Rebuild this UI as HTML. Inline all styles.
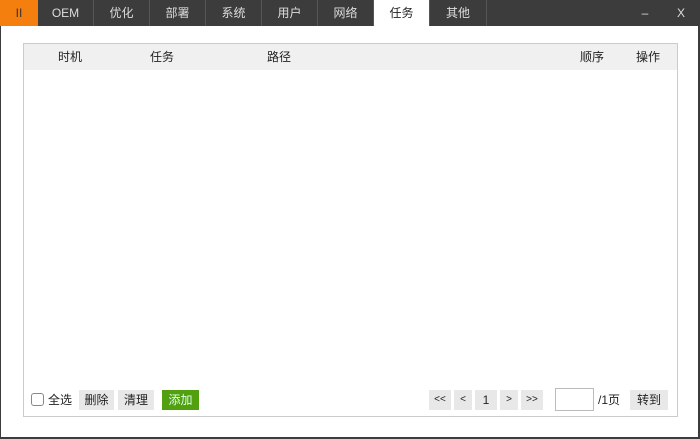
<!DOCTYPE html><html><head><meta charset="utf-8"><style>
*{margin:0;padding:0;box-sizing:border-box}
body{width:700px;height:439px;background:#3c3c3c;font-family:"Liberation Sans","Noto Sans CJK SC",sans-serif;font-size:12px;color:#222;position:relative;overflow:hidden}
.top{position:absolute;left:0;top:0;width:700px;height:26px;background:#3c3c3c}
.tab{position:absolute;top:0;height:26px;line-height:26px;text-align:center;color:#ddd;font-size:12px;border-right:1px solid #555}
.main{position:absolute;left:1px;top:26px;width:697px;height:411px;background:#fff}
.panel{position:absolute;left:23px;top:43px;width:655px;height:374px;border:1px solid #ccc;background:#fff}
.hdr{position:absolute;left:0;top:0;width:653px;height:26px;background:#f0f0f0;line-height:26px}
.hdr span{position:absolute;top:0}
.btn{position:absolute;top:346px;height:20px;line-height:20px;background:#e8e8e8;text-align:center;font-size:12px}
</style></head><body>
<div class="top">
<div class="tab" style="left:0;width:38px;background:#f57f0e;color:#333;border:none">II</div>
<div class="tab" style="left:38px;width:56px">OEM</div>
<div class="tab" style="left:94px;width:56px">优化</div>
<div class="tab" style="left:150px;width:56px">部署</div>
<div class="tab" style="left:206px;width:56px">系统</div>
<div class="tab" style="left:262px;width:56px">用户</div>
<div class="tab" style="left:318px;width:56px">网络</div>
<div class="tab" style="left:374px;width:56px;background:#fff;color:#222">任务</div>
<div class="tab" style="left:430px;width:57px">其他</div>
<div class="tab" style="left:630px;width:30px;border:none">–</div>
<div class="tab" style="left:666px;width:30px;border:none">X</div>
</div>
<div class="main"></div>
<div class="panel">
<div class="hdr"><span style="left:34px">时机</span><span style="left:126px">任务</span><span style="left:243px">路径</span><span style="left:556px">顺序</span><span style="left:612px">操作</span></div>
<div style="position:absolute;left:7px;top:349px;width:13px;height:13px;border:1px solid #888;border-radius:3px"></div>
<div style="position:absolute;left:24px;top:346px;line-height:20px">全选</div>
<div class="btn" style="left:55px;width:35px">删除</div>
<div class="btn" style="left:94px;width:36px">清理</div>
<div class="btn" style="left:138px;width:37px;background:#52a00f;color:#dfe">添加</div>
<div class="btn" style="left:405px;width:22px;font-size:10px">&lt;&lt;</div>
<div class="btn" style="left:430px;width:18px;font-size:10px">&lt;</div>
<div class="btn" style="left:451px;width:22px">1</div>
<div class="btn" style="left:476px;width:18px;font-size:10px">&gt;</div>
<div class="btn" style="left:497px;width:22px;font-size:10px">&gt;&gt;</div>
<div style="position:absolute;left:531px;top:344px;width:39px;height:23px;border:1px solid #bbb"></div>
<div style="position:absolute;left:574px;top:346px;line-height:20px">/1页</div>
<div class="btn" style="left:606px;width:38px">转到</div>
</div>
</body></html>
